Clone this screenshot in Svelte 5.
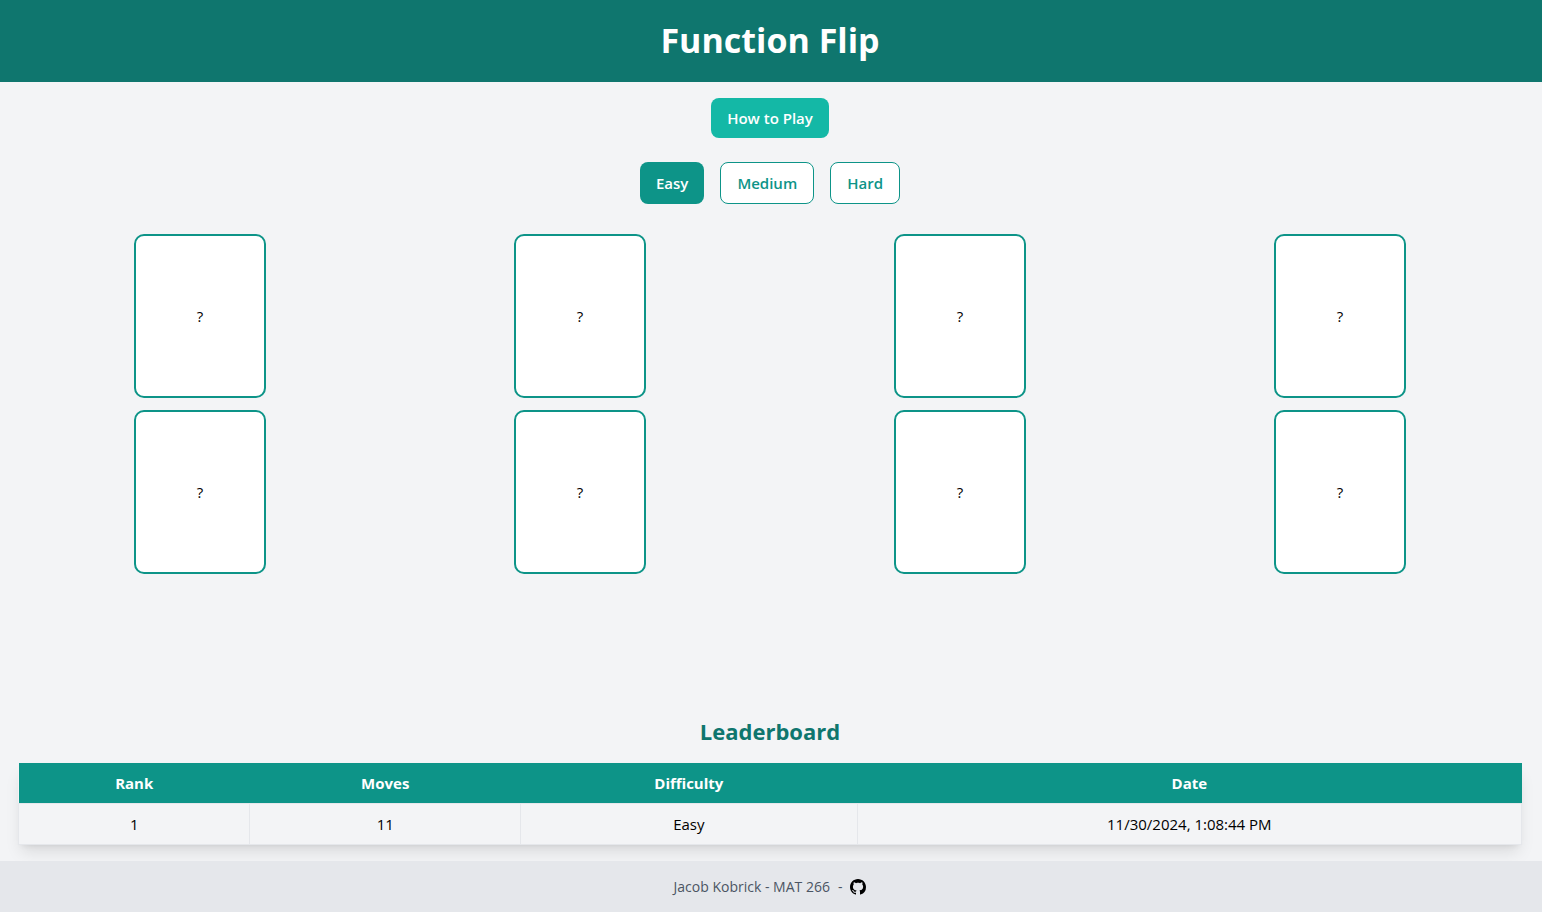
<script>
  const levels = ['Easy', 'Medium', 'Hard'];
  let level = $state('Easy');
  const cards = Array.from({ length: 8 }, (_, i) => i + 1);
  const scores = [{ moves: 11, difficulty: 'Easy', date: '11/30/2024, 1:08:44 PM' }];
</script>

<div class="page">
  <header><h1>Function Flip</h1></header>

  <main>
    <button class="btn help" type="button">How to Play</button>

    <div class="levels">
      {#each levels as name}
        <button class="btn level" class:active={level === name} type="button" onclick={() => (level = name)}>{name}</button>
      {/each}
    </div>

    <div class="board">
      {#each cards as card (card)}
        <button class="card" type="button">?</button>
      {/each}
    </div>

    <section class="leaderboard">
      <h2>Leaderboard</h2>
      <table>
        <colgroup>
          <col class="rank" /><col class="moves" /><col class="difficulty" /><col />
        </colgroup>
        <thead>
          <tr><th scope="col">Rank</th><th scope="col">Moves</th><th scope="col">Difficulty</th><th scope="col">Date</th></tr>
        </thead>
        <tbody>
          {#each scores as score, i}
            <tr><td>{i + 1}</td><td>{score.moves}</td><td>{score.difficulty}</td><td>{score.date}</td></tr>
          {/each}
        </tbody>
      </table>
    </section>
  </main>

  <footer>
    <span>Jacob Kobrick - MAT 266</span>
    <span>-</span>
    <a href="#github" aria-label="GitHub">
      <svg viewBox="0 0 16 16" width="16" height="16" aria-hidden="true">
        <path d="M8 0C3.58 0 0 3.58 0 8c0 3.54 2.29 6.53 5.47 7.59.4.07.55-.17.55-.38 0-.19-.01-.82-.01-1.49-2.01.37-2.53-.49-2.69-.94-.09-.23-.48-.94-.82-1.13-.28-.15-.68-.52-.01-.53.63-.01 1.08.58 1.23.82.72 1.21 1.87.87 2.33.66.07-.52.28-.87.51-1.07-1.78-.2-3.64-.89-3.64-3.95 0-.87.31-1.59.82-2.15-.08-.2-.36-1.02.08-2.12 0 0 .67-.21 2.2.82.64-.18 1.32-.27 2-.27s1.36.09 2 .27c1.53-1.04 2.2-.82 2.2-.82.44 1.1.16 1.92.08 2.12.51.56.82 1.27.82 2.15 0 3.07-1.87 3.75-3.65 3.95.29.25.54.73.54 1.48 0 1.07-.01 1.93-.01 2.2 0 .21.15.46.55.38A8.01 8.01 0 0 0 16 8c0-4.42-3.58-8-8-8z" />
      </svg>
    </a>
  </footer>
</div>

<style>
  :global(body) {
    margin: 0;
  }
  .page {
    min-height: 100vh;
    display: flex;
    flex-direction: column;
    background: #f3f4f6;
    color: #000;
    font: 15px/24px "Segoe UI", "Open Sans", "Noto Sans", sans-serif;
  }
  .page :is(h1, h2) {
    margin: 0;
    font-weight: 700;
    text-align: center;
  }
  header {
    padding: 20px 18px 22px 16px;
    background: #0f766e;
    color: #fff;
  }
  h1 {
    font-size: 34px;
    line-height: 40px;
  }
  main {
    flex: 1;
    display: flex;
    flex-direction: column;
    align-items: center;
    padding: 16px 18px 16px 16px;
  }
  button {
    box-sizing: border-box;
    font: inherit;
    cursor: pointer;
  }
  .btn {
    padding: 8px 16px;
    border: 0;
    border-radius: 8px;
    font-weight: 600;
  }
  .help {
    background: #14b8a6;
    color: #fff;
  }
  .levels {
    display: flex;
    gap: 16px;
    margin: 24px 0 30px;
  }
  .level {
    border: 1px solid #0d9488;
    background: #fff;
    color: #0d9488;
  }
  .level.active {
    border-width: 0;
    background: #0d9488;
    color: #fff;
  }
  .board {
    align-self: stretch;
    display: grid;
    grid-template-columns: repeat(4, 1fr);
    gap: 12px;
    justify-items: center;
  }
  .card {
    width: 132px;
    height: 164px;
    padding: 0;
    border: 2px solid #0d9488;
    border-radius: 10px;
    background: #fff;
    color: #000;
  }
  .leaderboard {
    align-self: stretch;
    margin-top: auto;
    padding: 0 2px;
  }
  h2 {
    padding-bottom: 16px;
    font-size: 22px;
    line-height: 32px;
    color: #0f766e;
  }
  table {
    width: 100%;
    border-collapse: collapse;
    text-align: center;
    box-shadow: 0 10px 15px -3px rgb(0 0 0 / 0.1), 0 4px 6px -4px rgb(0 0 0 / 0.1);
  }
  .rank {
    width: 15.4%;
  }
  .moves {
    width: 18%;
  }
  .difficulty {
    width: 22.4%;
  }
  thead {
    background: #0d9488;
    color: #fff;
  }
  th {
    padding: 8px 16px;
    font-weight: 700;
  }
  td {
    padding: 8px 16px;
    border: 1px solid #e5e7eb;
    background: #f3f4f6;
  }
  footer {
    position: relative;
    display: flex;
    align-items: center;
    justify-content: center;
    gap: 8px;
    min-height: 51px;
    padding-right: 2px;
    background: #e5e7eb;
    color: #4b5563;
    font-size: 14px;
    line-height: 20px;
  }
  footer a {
    display: flex;
    color: #000;
  }
  svg {
    fill: currentColor;
  }
</style>
